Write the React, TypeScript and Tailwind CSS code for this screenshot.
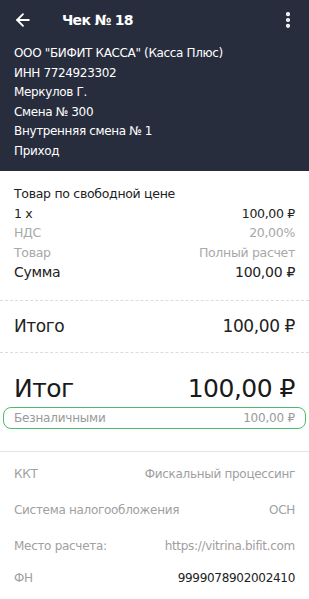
import { ArrowLeft, EllipsisVertical } from 'lucide-react';

const font = { fontFamily: '"DejaVu Sans", "Open Sans", sans-serif' };

function Row({ left, right, className }: { left: string; right: string; className?: string }) {
  return (
    <div className={`flex items-center justify-between ${className || ''}`}>
      <span>{left}</span>
      <span>{right}</span>
    </div>
  );
}

export default function App() {
  return (
    <div className="w-[309px] h-[599px] overflow-hidden bg-white" style={font}>
      {/* Header */}
      <div className="bg-[#282d3d] text-white pb-[10px]">
        <div className="flex items-center h-[40px] px-[13px]">
          <ArrowLeft className="w-[20px] h-[20px]" strokeWidth={2.2} />
          <span className="ml-[29px] text-[14px] font-bold tracking-[-0.7px]">Чек № 18</span>
          <EllipsisVertical className="ml-auto w-[20px] h-[20px] mr-[-2px]" strokeWidth={3} />
        </div>
        <div className="px-[14px] pt-[4px] text-[12px] leading-[19.5px] tracking-[-0.35px]">
          <div>ООО "БИФИТ КАССА" (Касса Плюс)</div>
          <div>ИНН 7724923302</div>
          <div>Меркулов Г.</div>
          <div>Смена № 300</div>
          <div>Внутренняя смена № 1</div>
          <div>Приход</div>
        </div>
      </div>

      {/* Item */}
      <div className="px-[14px] pt-[13px] pb-[17px] text-[12.5px] leading-[19.5px] tracking-[-0.3px] text-[#222]">
        <div>Товар по свободной цене</div>
        <Row left="1 x" right="100,00 ₽" />
        <Row left="НДС" right="20,00%" className="text-[#a8a8a8]" />
        <Row left="Товар" right="Полный расчет" className="text-[#a8a8a8]" />
        <Row left="Сумма" right="100,00 ₽" className="text-[14px] leading-[21px]" />
      </div>

      <div className="border-t border-dashed border-[#dcdcdc]" />

      <Row left="Итого" right="100,00 ₽" className="px-[14px] h-[51px] text-[17px] text-[#222] tracking-[-0.4px]" />

      <div className="border-t border-dashed border-[#dcdcdc]" />

      <Row
        left="Итог"
        right="100,00 ₽"
        className="px-[14px] pt-[17px] h-[54px] text-[25px] text-[#1a1a1a] tracking-[-0.5px]"
      />

      <div className="mx-[3px] h-[22px] rounded-[8px] border-[1.5px] border-[#4cbb6c] flex items-center justify-between px-[10px] text-[12px] text-[#9a9a9a] tracking-[-0.2px]">
        <span>Безналичными</span>
        <span>100,00 ₽</span>
      </div>

      <div className="mt-[22px] border-t border-[#e2e2e2]" />

      <div className="px-[14px] text-[12px] text-[#a0a0a0] tracking-[-0.3px]">
        <Row left="ККТ" right="Фискальный процессинг" className="h-[36px] mt-[4px]" />
        <Row left="Система налогообложения" right="ОСН" className="h-[36px]" />
        <Row left="Место расчета:" right="https://vitrina.bifit.com" className="h-[36px]" />
        <div className="flex items-center justify-between h-[28px]">
          <span>ФН</span>
          <span className="text-[#222]">9999078902002410</span>
        </div>
      </div>
    </div>
  );
}
